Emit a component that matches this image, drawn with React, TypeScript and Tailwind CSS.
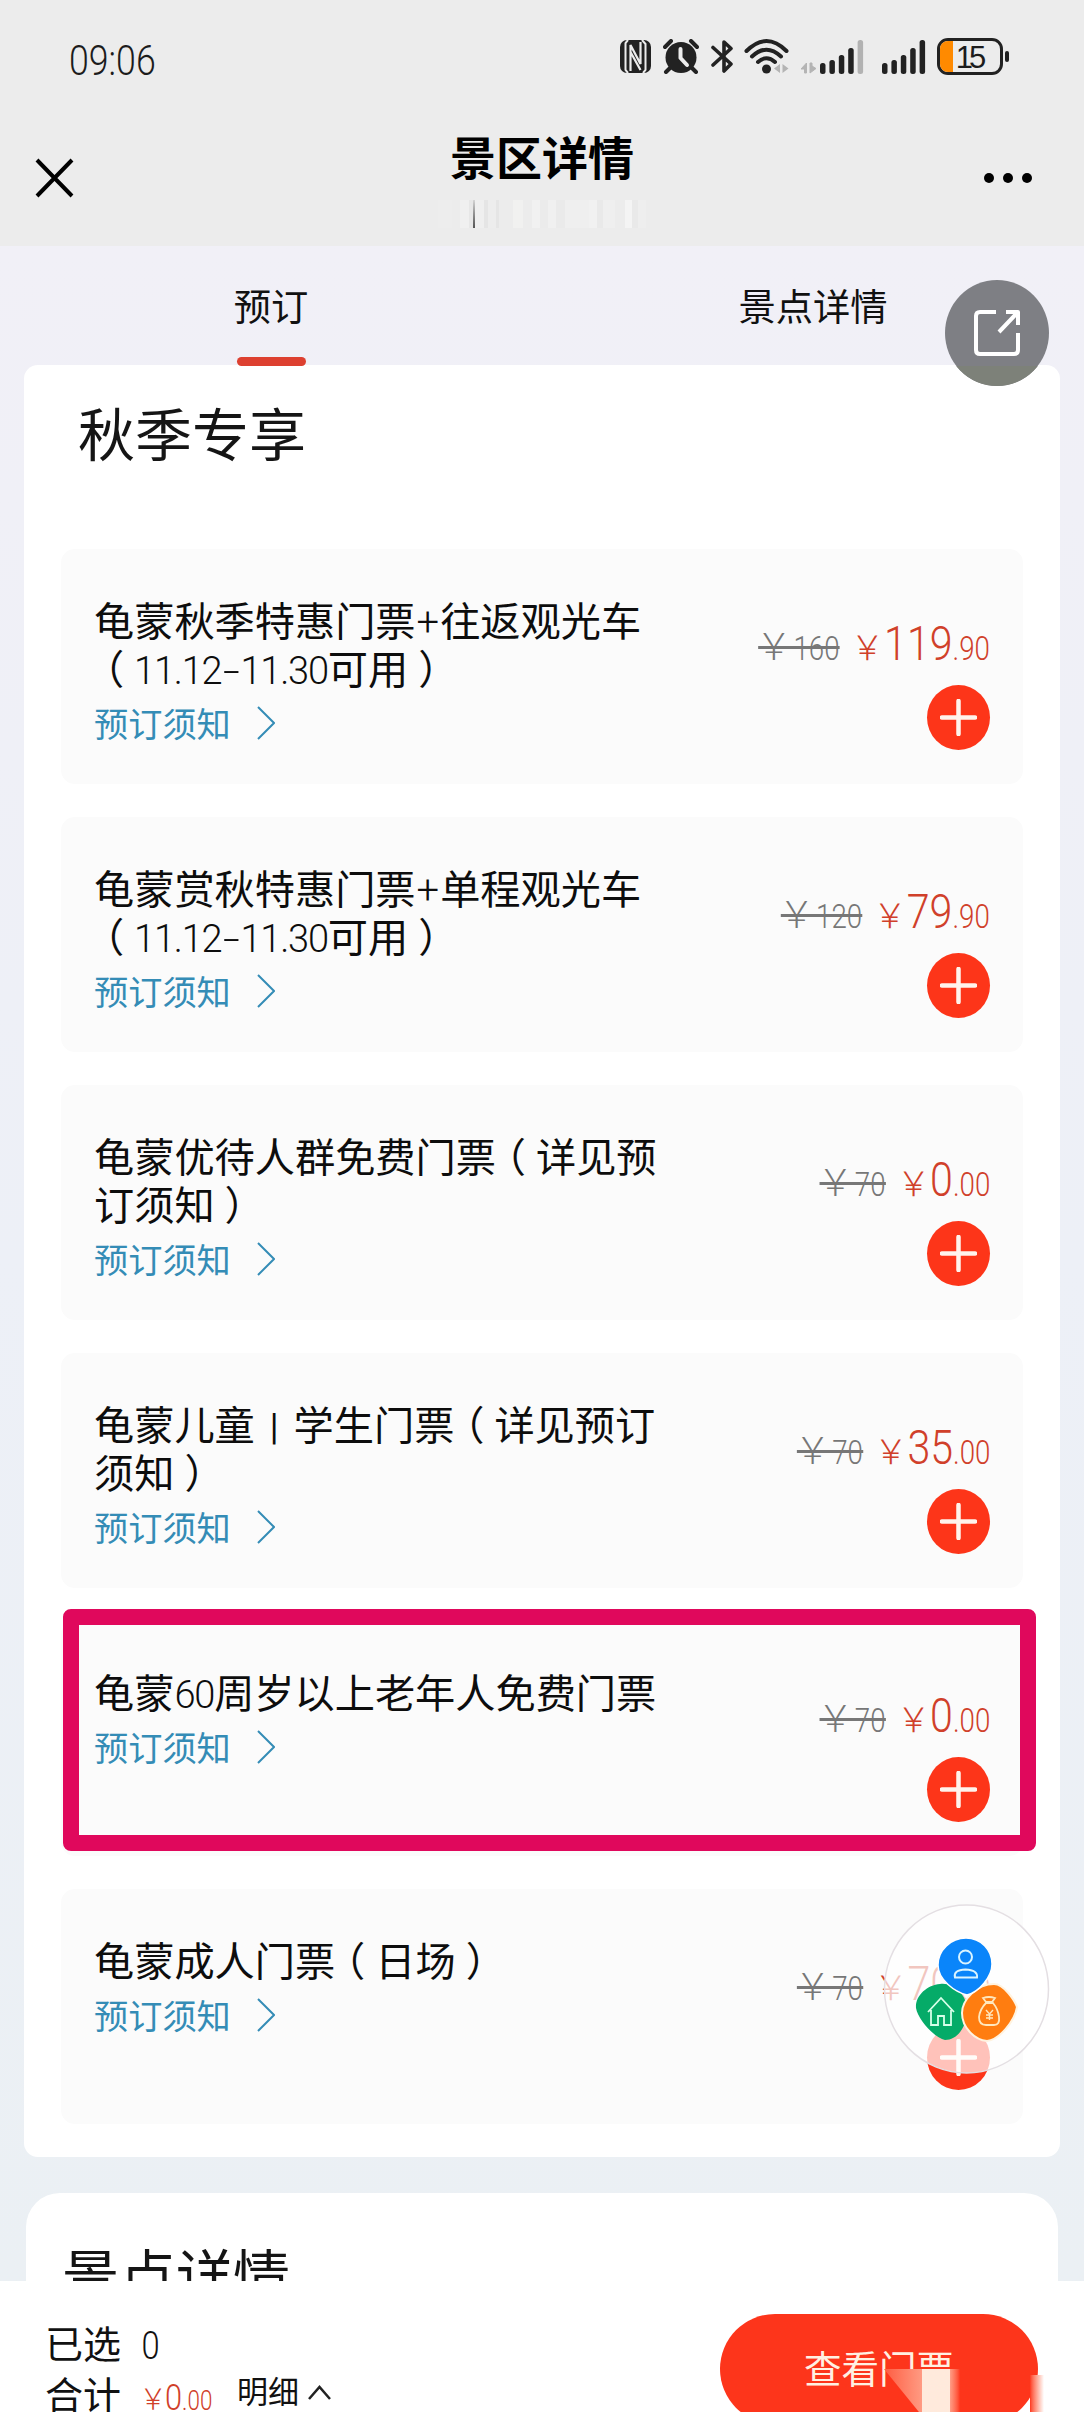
import React from 'react';

const tickets = [
  { lines: ['龟蒙秋季特惠门票+往返观光车', '（11.12-11.30可用）'], original: '160', yuan: '119', cents: '90' },
  { lines: ['龟蒙赏秋特惠门票+单程观光车', '（11.12-11.30可用）'], original: '120', yuan: '79', cents: '90' },
  { lines: ['龟蒙优待人群免费门票（详见预', '订须知）'], original: '70', yuan: '0', cents: '00' },
  { lines: ['龟蒙儿童 | 学生门票（详见预订', '须知）'], original: '70', yuan: '35', cents: '00' },
  { lines: ['龟蒙60周岁以上老年人免费门票'], original: '70', yuan: '0', cents: '00', marked: true },
  { lines: ['龟蒙成人门票（日场）'], original: '70', yuan: '70', cents: '00' },
];

// Sets numbers in the narrower face and centres full-width brackets in their cell
const TicketLine = ({ text }: { text: string }) => (
  <div className="h-[48px] whitespace-nowrap">
    {text.split(/([\d.]+|[+-]|（|）| \| )/).map((part, i) => {
      if (part === '（' || part === '）') {
        return <span key={i} className="px-[10px] [font-feature-settings:'halt']">{part}</span>;
      }
      if (part === ' | ') {
        return <span key={i} className="mx-[15px] font-[Roboto] text-[36px] leading-none align-[1px]">|</span>;
      }
      if (part === '-') {
        return (
          <span key={i} className="mx-[4px] inline-block scale-x-[1.6] font-[Roboto] text-[38px] leading-none font-light">
            -
          </span>
        );
      }
      if (part === '+') {
        return <span key={i} className="px-[1px] font-[Roboto] text-[40px] leading-none font-light">+</span>;
      }
      if (/^[\d.]+$/.test(part)) {
        return (
          <span key={i} className="font-[Roboto] text-[38px] leading-none tracking-[-1.200px] font-light">
            {part}
          </span>
        );
      }
      return <span key={i}>{part}</span>;
    })}
  </div>
);

const SignalBars = ({ last }: { last: string }) => (
  <svg className="w-[44px] h-[34px]" viewBox="0 0 44 34" fill="#222">
    <rect x="0" y="23" width="5.5" height="11" rx="2.5" />
    <rect x="9.4" y="20" width="5.5" height="14" rx="2.5" />
    <rect x="18.8" y="15" width="5.5" height="19" rx="2.5" />
    <rect x="28.2" y="8" width="5.5" height="26" rx="2.5" />
    <rect x="37.6" y="0" width="5.5" height="34" rx="2.5" fill={last} />
  </svg>
);

const StatusBar = () => (
  <div className="h-[112px] flex items-start pl-[69px] text-[#1c1c1c]">
    <div className="pt-[36px] w-[551px] h-[80px]">
      <span className="inline-block origin-left scale-x-[0.85] font-[Roboto] font-light text-[42px] leading-[49px]">
        09:06
      </span>
    </div>
    <div className="flex items-center pt-[38px] h-[75px]">
      {/* NFC */}
      <svg className="w-[31px] h-[33px]" viewBox="0 0 31 33">
        <rect width="31" height="33" rx="7" fill="#222" />
        <path d="M8 0L5.500 3V30L8 33M22 0L25.500 4V30L23 33" fill="none" stroke="#ececec" strokeWidth="2" />
        <path d="M10.500 31V5L20.500 24V2M10.500 12L20.500 30" fill="none" stroke="#ececec" strokeWidth="2.200" />
      </svg>
      {/* Alarm */}
      <svg className="ml-[12px] w-[36px] h-[35px]" viewBox="0 0 36 35">
        <path d="M2 8L8 2M34 8L28 2M7 29L3 33M29 29L33 33" stroke="#222" strokeWidth="4" strokeLinecap="round" />
        <circle cx="18" cy="18.500" r="15.500" fill="#222" />
        <path d="M17.500 10V19L24 26" fill="none" stroke="#ececec" strokeWidth="4" strokeLinecap="round" strokeLinejoin="round" />
      </svg>
      {/* Bluetooth */}
      <svg className="ml-[12px] w-[22px] h-[35px]" viewBox="0 0 22 35">
        <path d="M2 8.500L20 25L13 32V3L20 9.500L2 26" fill="none" stroke="#222" strokeWidth="3.600" strokeLinejoin="round" strokeLinecap="round" />
      </svg>
      {/* Wi-Fi */}
      <svg className="ml-[11px] w-[46px] h-[35px]" viewBox="0 0 46 35">
        <path d="M2.500 12Q22.500 -8 42.500 12M8 17.500Q22.500 4 37 17.500M14 23Q22.500 15.500 31 23" fill="none" stroke="#222" strokeWidth="4" strokeLinecap="round" />
        <circle cx="22.500" cy="30" r="4.500" fill="#222" />
        <path d="M36 25V34L30 29.500ZM38.500 25V34L44.500 29.500Z" fill="#b4b4b4" />
      </svg>
      <svg className="ml-[11px] w-[15px] h-[35px]" viewBox="0 0 15 35">
        <path d="M5.500 24V34H3.500V30H0ZM9 34V24H11V27L15 29.500Z" fill="#b4b4b4" stroke="#b4b4b4" />
      </svg>
      <span className="ml-[4px]"><SignalBars last="#b2b2b2" /></span>
      <span className="ml-[18px]"><SignalBars last="#222" /></span>
      {/* Battery */}
      <div className="ml-[11px] w-[66px] h-[37px] rounded-[11px] border-[3px] border-[#222] overflow-hidden flex">
        <div className="w-[13px] bg-[#ff8a00]" />
        <div className="w-[32px] text-center font-['Liberation_Sans'] text-[31px] leading-[33px] tracking-[-4px]">15</div>
      </div>
      <div className="ml-[2px] w-[4px] h-[11px] rounded-[2px] bg-[#222]" />
    </div>
  </div>
);

// Soft vertical streaks under the page title
const streaks: [string, string][] = [
  ['w-[14px]', 'bg-[#eeeeee]'],
  ['w-[8px]', 'bg-[#ececec]'],
  ['w-[9px]', 'bg-[#f2f2f2]'],
  ['w-[4px]', 'bg-[#e7e7e7]'],
  ['w-[2px]', 'bg-linear-to-b from-[#d0d0d0] to-[#303030]'],
  ['w-[9px]', 'bg-[#f0f0f0]'],
  ['w-[4px]', 'bg-[#e4e4e4]'],
  ['w-[8px]', 'bg-[#eeeeee]'],
  ['w-[3px]', 'bg-[#e4e4e4]'],
  ['w-[14px]', 'bg-[#ededed]'],
  ['w-[10px]', 'bg-[#f3f3f2]'],
  ['w-[9px]', 'bg-[#ececec]'],
  ['w-[8px]', 'bg-[#f3f3f3]'],
  ['w-[8px]', 'bg-[#ebebeb]'],
  ['w-[8px]', 'bg-[#f2f2f2]'],
  ['w-[9px]', 'bg-[#eaeaea]'],
  ['w-[24px]', 'bg-[#f0f0f0]'],
  ['w-[8px]', 'bg-[#f3f3f3]'],
  ['w-[6px]', 'bg-[#e9e9e9]'],
  ['w-[12px]', 'bg-[#f0f0f0]'],
  ['w-[10px]', 'bg-[#ececec]'],
  ['w-[7px]', 'bg-[#f7f7f7]'],
  ['w-[6px]', 'bg-[#e9e9e9]'],
  ['w-[8px]', 'bg-[#efefef]'],
];

const TitleBar = () => (
  <div className="h-[134px] px-[35px] grid grid-cols-[1fr_auto_1fr]">
    <svg className="mt-[46px] w-[39px] h-[40px]" viewBox="0 0 39 40" stroke="#000" strokeWidth="4">
      <path d="M2 2L37 38M37 2L2 38" />
    </svg>
    <div className="flex flex-col items-center">
      <h1 className="mt-[10px] text-[46px] leading-[66px] font-bold text-black">景区详情</h1>
      <div className="mt-[12px] h-[28px] flex opacity-80">
        {streaks.map(([width, tone], i) => (
          <i key={i} className={`${width} ${tone}`} />
        ))}
      </div>
    </div>
    <div className="mt-[61px] flex gap-[9px] justify-self-end pr-[17px]">
      <i className="size-[10px] rounded-full bg-black" />
      <i className="size-[10px] rounded-full bg-black" />
      <i className="size-[10px] rounded-full bg-black" />
    </div>
  </div>
);

const Tabs = () => (
  <div className="h-[119px] grid grid-cols-2 text-[37.300px] leading-[54px] text-[#111]">
    <div className="pt-[32px] flex flex-col items-center">
      <span>预订</span>
      <i className="mt-[25px] w-[69px] h-[9px] rounded-full bg-[#dd4030]" />
    </div>
    <div className="pt-[32px] text-center">景点详情</div>
  </div>
);

const TicketCard = ({ ticket }: { ticket: (typeof tickets)[number] }) => (
  <div className="relative h-[235px] rounded-[14px] bg-[#fbfbfb] flex justify-between pl-[33px] pr-[33px]">
    <div className="pt-[46px]">
      <div className="text-[40.200px] leading-[48px] text-[#0d0d0d]">
        {ticket.lines.map((line) => (
          <TicketLine key={line} text={line} />
        ))}
      </div>
      <div className="mt-[7px] flex items-center text-[34.200px] leading-[48px] text-[#348cb6]">
        预订须知
        <svg className="mt-[2px] ml-[26px] w-[18px] h-[34px]" viewBox="0 0 18 34" fill="none" stroke="currentColor" strokeWidth="2">
          <path d="M1 1L17 17L1 33" />
        </svg>
      </div>
    </div>
    <div className="pt-[65px] flex flex-col items-end">
      <div className="h-[60px] flex items-baseline origin-right scale-x-[0.84] font-[Roboto] font-light leading-[60px] whitespace-nowrap">
        <span className="relative text-[33px] text-[#777]">
          <span className="mr-[2px] inline-block origin-right scale-x-[1.15] font-['Noto_Sans_CJK_SC'] text-[37px]">￥</span>
          {ticket.original}
          <i className="absolute -left-[3px] right-0 top-[32px] h-[3px] bg-[#777]" />
        </span>
        <span className="ml-[19px] text-[#d0402a] text-[33px]">
          <span className="inline-block origin-right scale-x-[1.18] font-['Noto_Sans_CJK_SC'] text-[34px]">￥</span>
          <span className="text-[49px]">{ticket.yuan}</span>.{ticket.cents}
        </span>
      </div>
      <button className="mt-[11px] w-[63px] h-[65px] rounded-[50%] bg-[#fd3519] flex items-center justify-center">
        <svg className="w-[37px] h-[37px]" viewBox="0 0 37 37" stroke="#fff3ec" strokeWidth="4.500" strokeLinecap="round">
          <path d="M18.500 2V35M2 18.500H35" />
        </svg>
      </button>
    </div>
    {ticket.marked && (
      <div className="absolute left-[2px] -top-[12px] w-[973px] h-[242px] border-[16px] border-[#e0085c] rounded-[8px]" />
    )}
  </div>
);

const ShareButton = () => (
  <div className="absolute left-[945px] top-[280px] w-[104px] h-[106px] rounded-[50%] overflow-hidden bg-[#7e7f84]">
    <div className="absolute inset-x-0 bottom-0 h-[20px] bg-[#7d8179]" />
    <svg className="absolute left-[28px] top-[28px] w-[48px] h-[49px]" viewBox="0 0 48 49" fill="none" stroke="#fff" strokeWidth="4" strokeLinecap="butt" strokeLinejoin="round">
      <path d="M23 4H7Q3 4 3 8V42Q3 46 7 46H41Q45 46 45 42V25" />
      <path d="M33 4H45V17M45 4L26 24" />
    </svg>
  </div>
);

const FloatingMenu = () => (
  <svg className="absolute left-[883px] top-[1904px] w-[168px] h-[171px]" viewBox="0 0 168 171" fill="none">
    <ellipse cx="83.500" cy="85" rx="82" ry="84" fill="#fff" fillOpacity="0.7" stroke="#e4dfe3" strokeWidth="1.500" />
    <path d="M57 80C70 78 84 90 84 106C84 122 75 136 62 136C52 134 35 116 33 104C32 92 44 81 57 80Z" fill="#05ab68" />
    <path d="M111 80C121 80 132 97 134 103C132 117 116 136 104 137C92 136 79 124 79 109C79 96 94 80 111 80Z" fill="#ff7d10" stroke="#fff3e0" strokeWidth="2" />
    <path d="M83 34C98 34 109 46 109 60C109 73 96 88 84 91C72 88 55 76 55 61C55 46 68 34 83 34Z" fill="#0a85fa" stroke="#fff" strokeWidth="1.500" />
    <g stroke="#d9f4ff" strokeWidth="2">
      <circle cx="82.500" cy="53" r="6.500" />
      <path d="M72 73.500Q70 66 82.500 65.500Q95 66 94 73.500Z" />
    </g>
    <path d="M45 108L58 94L71 108M48 106V121H55V112H61V121H68V106" stroke="#d7ffe9" strokeWidth="1.800" />
    <g stroke="#ffe7bd" strokeWidth="1.800">
      <path d="M103 99Q97 105 96 113Q96 121 103 121H111Q117 121 116 113Q115 105 110 99Z" />
      <path d="M103 98L100 94Q106 92 112 94L109 98Z" />
      <path d="M103 106L106.500 110L110 106M106.500 110V116M103 111H110M103 114H110" strokeWidth="1.400" />
    </g>
  </svg>
);

const CheckoutBar = () => (
  <div className="relative h-[131px] bg-white flex justify-between pl-[45px] pr-[46px] text-[#111]">
    <div className="pt-[35px] text-[38px] leading-[51px]">
      <div className="flex">
        已选
        <span className="ml-[19px] mt-[5px] h-[46px] font-[Roboto] font-light text-[38px] scale-x-[0.86]">0</span>
      </div>
      <div className="flex whitespace-nowrap">
        合计
        <div className="ml-[20px] w-[96px] mt-[5px]">
          <div className="w-max origin-left scale-x-[0.83] font-[Roboto] font-light text-[27px] text-[#d0402a]">
            <span className="inline-block scale-x-[1.15] font-['Noto_Sans_CJK_SC'] text-[29px]">￥</span>
            <span className="text-[37px]">0</span>.00
          </div>
        </div>
        <span className="-mt-[3px] text-[31px]">明细</span>
        <svg className="ml-[9px] mt-[18px] w-[23px] h-[15px]" viewBox="0 0 23 15" fill="none" stroke="#222" strokeWidth="2.500">
          <path d="M1 14L11.500 2L22 14" />
        </svg>
      </div>
    </div>
    <button className="mt-[33px] w-[318px] h-[110px] pb-[3px] shrink-0 rounded-full bg-[#fd351b] text-[37.500px] text-[#fff0e2]">
      查看门票
    </button>
    {/* Faded light streaks over the button */}
    <div className="absolute left-[922px] top-[88px] w-[28px] h-[43px] bg-[#ffeadc]" />
    <div className="absolute left-[950px] top-[88px] w-[10px] h-[43px] bg-linear-to-r from-[#ff9d86] to-[#fd351b]" />
    <div className="absolute left-[884px] top-[88px] w-[38px] h-[43px] bg-linear-to-r from-[#fd5a40] to-[#ff9a82] [clip-path:polygon(0_0,100%_0,100%_100%,92%_100%)]" />
    <div className="absolute left-[1030px] top-[94px] w-[14px] h-[37px] bg-linear-to-r from-[#fd351b] to-white" />
  </div>
);

const App = () => {
  return (
    <div className="relative w-[1084px] h-[2412px] overflow-hidden bg-[#eff0f6] flex flex-col font-['Noto_Sans_CJK_SC',sans-serif]">
      <header className="h-[246px] shrink-0 bg-[#ececec]">
        <StatusBar />
        <TitleBar />
      </header>

      <main className="h-[2035px] overflow-hidden bg-linear-to-b from-[#f1f0f7] via-[#edf0f7] to-[#ebf0f4]">
        <Tabs />
        <section className="mx-[24px] h-[1792px] rounded-[14px] bg-white px-[37px]">
          <h2 className="pt-[25px] pl-[17px] h-[184px] text-[57px] leading-[82px] text-[#151515]">秋季专享</h2>
          <div className="flex flex-col gap-[33px] w-[962px]">
            {tickets.map((ticket) => (
              <TicketCard key={ticket.lines[0]} ticket={ticket} />
            ))}
          </div>
        </section>
        <section className="mt-[36px] mx-[26px] h-[120px] rounded-t-[34px] bg-white pt-[38px] pl-[36px]">
          <h2 className="text-[57px] leading-[82px] text-[#151515]">景点详情</h2>
        </section>
      </main>

      <CheckoutBar />
      <ShareButton />
      <FloatingMenu />
    </div>
  );
};

export default App;
